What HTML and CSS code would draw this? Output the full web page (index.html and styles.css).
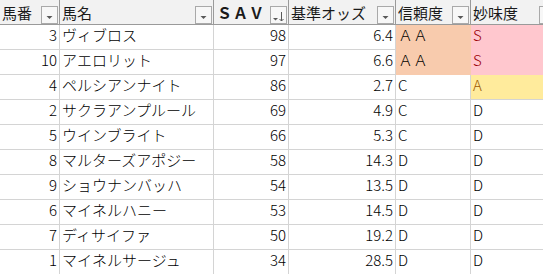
FILE: index.html
```html
<!DOCTYPE html>
<html lang="ja">
<head>
<meta charset="utf-8">
<link rel="stylesheet" href="styles.css">
</head>
<body>
<table class="sheet">
  <colgroup>
    <col class="c1"><col class="c2"><col class="c3"><col class="c4"><col class="c5"><col class="c6">
  </colgroup>
  <thead>
    <tr>
      <th><div class="hd"><span class="lbl">馬番</span><span class="fbtn"><svg width="15" height="17" viewBox="0 0 15 17"><path d="M4.5 9h6l-3 3z" fill="#595959"/></svg></span></div></th>
      <th><div class="hd"><span class="lbl">馬名</span><span class="fbtn"><svg width="15" height="17" viewBox="0 0 15 17"><path d="M4.5 9h6l-3 3z" fill="#595959"/></svg></span></div></th>
      <th><div class="hd"><span class="lbl sav">ＳＡＶ</span><span class="fbtn"><svg width="15" height="17" viewBox="0 0 15 17"><path d="M2 11h5l-2.5 2.5z" fill="#595959"/><path d="M10.5 5v9M8.5 12l2 2 2-2" stroke="#595959" stroke-width="1" fill="none"/></svg></span></div></th>
      <th><div class="hd"><span class="lbl">基準オッズ</span><span class="fbtn"><svg width="15" height="17" viewBox="0 0 15 17"><path d="M4.5 9h6l-3 3z" fill="#595959"/></svg></span></div></th>
      <th><div class="hd"><span class="lbl">信頼度</span><span class="fbtn"><svg width="15" height="17" viewBox="0 0 15 17"><path d="M4.5 9h6l-3 3z" fill="#595959"/></svg></span></div></th>
      <th><div class="hd"><span class="lbl">妙味度</span><span class="fbtn"><svg width="15" height="17" viewBox="0 0 15 17"><path d="M4.5 9h6l-3 3z" fill="#595959"/></svg></span></div></th>
    </tr>
  </thead>
  <tbody>
    <tr><td class="num">3</td><td>ヴィブロス</td><td class="num">98</td><td class="num">6.4</td><td class="orange">ＡＡ</td><td class="pink">S</td></tr>
    <tr><td class="num">10</td><td>アエロリット</td><td class="num">97</td><td class="num">6.6</td><td class="orange">ＡＡ</td><td class="pink">S</td></tr>
    <tr><td class="num">4</td><td>ペルシアンナイト</td><td class="num">86</td><td class="num">2.7</td><td>C</td><td class="yellow">A</td></tr>
    <tr><td class="num">2</td><td>サクラアンプルール</td><td class="num">69</td><td class="num">4.9</td><td>C</td><td>D</td></tr>
    <tr><td class="num">5</td><td>ウインブライト</td><td class="num">66</td><td class="num">5.3</td><td>C</td><td>D</td></tr>
    <tr><td class="num">8</td><td>マルターズアポジー</td><td class="num">58</td><td class="num">14.3</td><td>D</td><td>D</td></tr>
    <tr><td class="num">9</td><td>ショウナンバッハ</td><td class="num">54</td><td class="num">13.5</td><td>D</td><td>D</td></tr>
    <tr><td class="num">6</td><td>マイネルハニー</td><td class="num">53</td><td class="num">14.5</td><td>D</td><td>D</td></tr>
    <tr><td class="num">7</td><td>ディサイファ</td><td class="num">50</td><td class="num">19.2</td><td>D</td><td>D</td></tr>
    <tr><td class="num">1</td><td>マイネルサージュ</td><td class="num">34</td><td class="num">28.5</td><td>D</td><td>D</td></tr>
  </tbody>
</table>
</body>
</html>
```
FILE: styles.css
```css
html, body {
  margin: 0;
  padding: 0;
  background: #ffffff;
  overflow: hidden;
}
body {
  width: 543px;
  height: 274px;
  font-family: "Noto Sans CJK JP", "Noto Sans", sans-serif;
  font-size: 15px;
  font-weight: 300;
  color: #000;
}
.sheet {
  border-collapse: separate;
  border-spacing: 0;
  table-layout: fixed;
  width: 558px;
}
.c1 { width: 60px; }
.c2 { width: 154px; }
.c3 { width: 75px; }
.c4 { width: 107px; }
.c5 { width: 75px; }
.c6 { width: 87px; }

.sheet th {
  padding: 0;
  background: #f2f2f2;
  border-right: 1px solid #9a9a9a;
  border-bottom: 1px solid #9a9a9a;
  font-weight: normal;
  text-align: left;
  height: 25px;
  box-sizing: border-box;
}
.hd {
  display: flex;
  justify-content: space-between;
  height: 24px;
}
.lbl {
  padding: 3px 2px 0 2px;
  line-height: 20px;
  white-space: nowrap;
  overflow: hidden;
  color: #1a1a1a;
}
.sav { font-weight: bold; letter-spacing: 1px; padding-left: 3px; }
.fbtn {
  align-self: flex-end;
  flex: none;
  width: 17px;
  height: 18px;
  box-sizing: border-box;
  margin-right: 1px;
  border: 1px solid #a9a9a9;
  background: #f7f7f7;
  display: flex;
}
.fbtn svg { display: block; }

.sheet td {
  padding: 0 2px 4px 2px;
  line-height: 20px;
  height: 25px;
  box-sizing: border-box;
  border-right: 1px solid #d4d4d4;
  border-bottom: 1px solid #d4d4d4;
  white-space: nowrap;
  overflow: hidden;
  vertical-align: bottom;
}
.sheet td.num { text-align: right; }
.sheet td.orange {
  background: #f8cbad;
  border-color: #f8cbad;
}
.sheet td.pink {
  background: #ffc7ce;
  border-color: #ffc7ce;
  color: #9c0006;
}
.sheet td.yellow {
  background: #ffeb9c;
  color: #9c5700;
}
```
